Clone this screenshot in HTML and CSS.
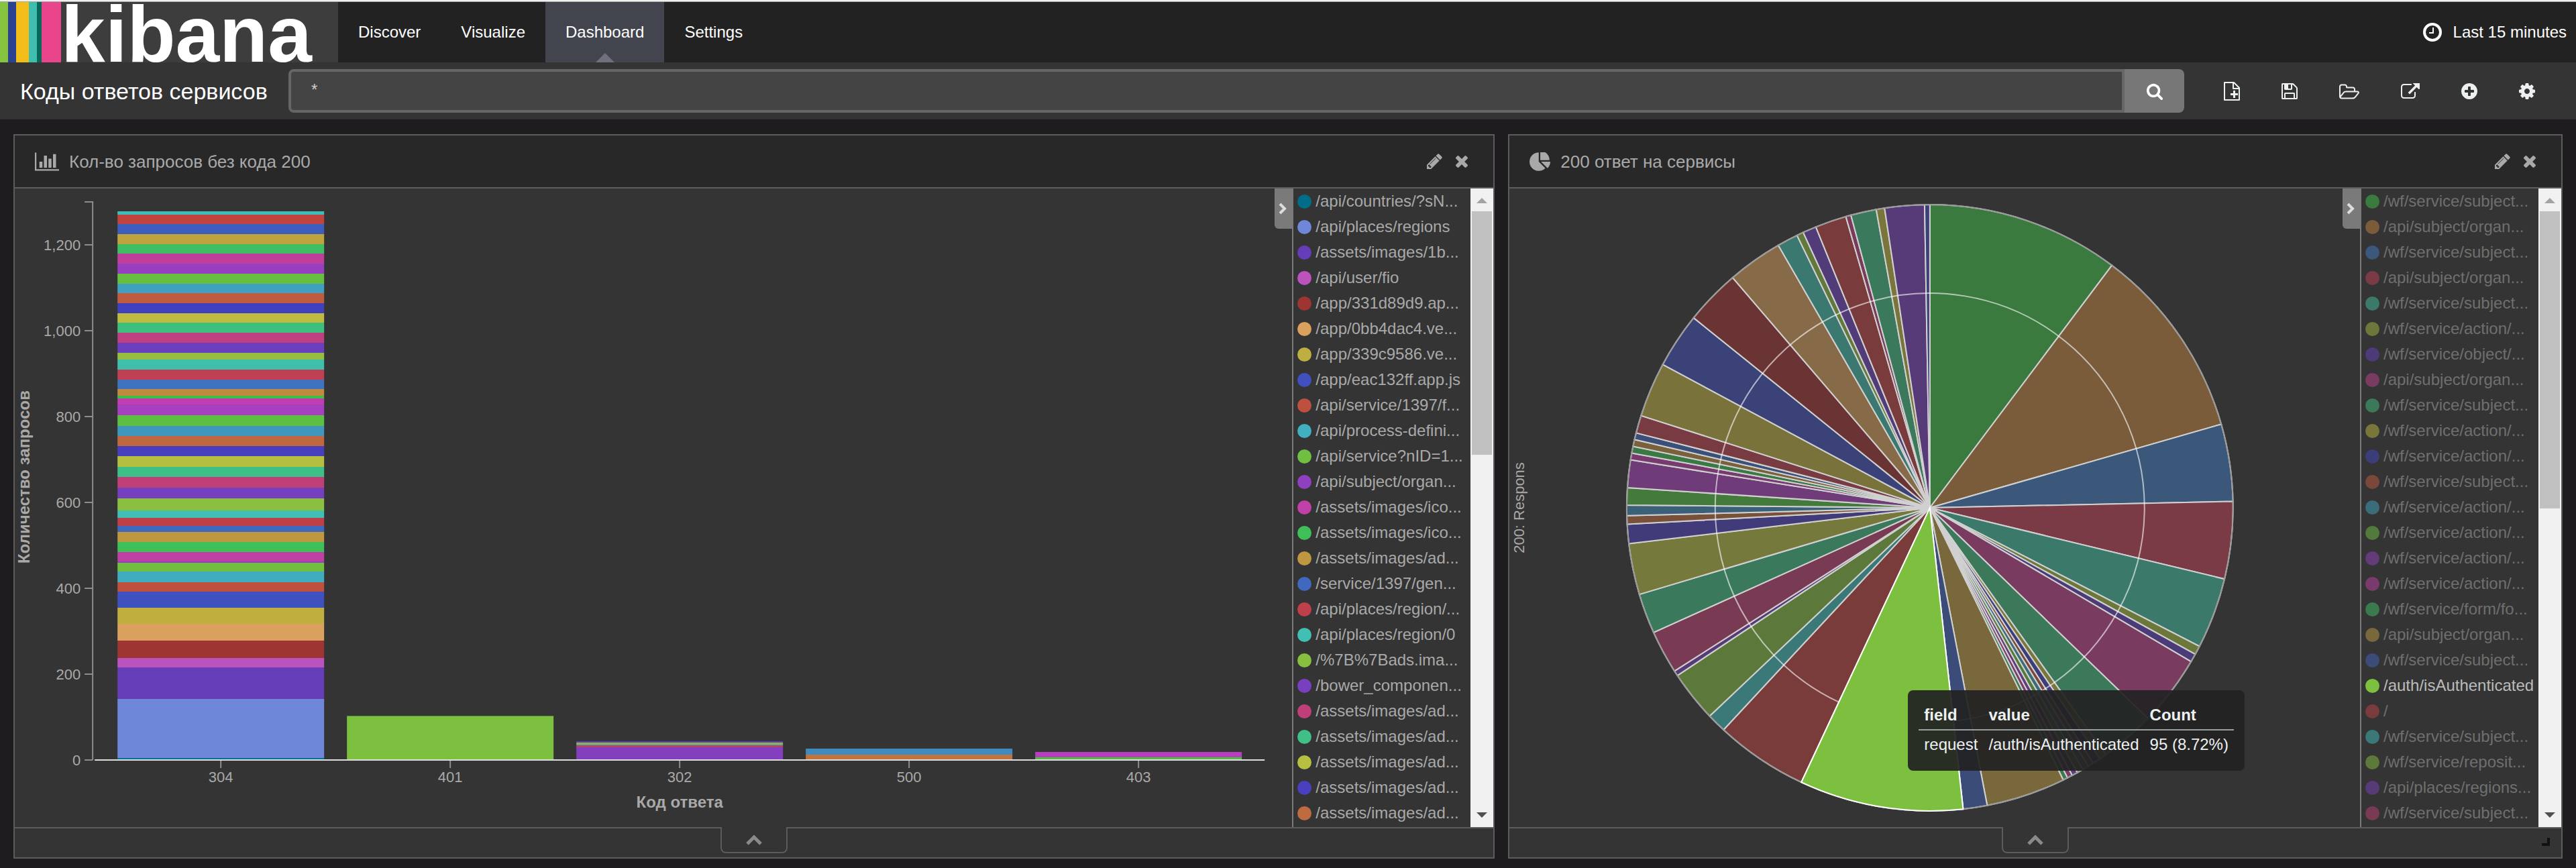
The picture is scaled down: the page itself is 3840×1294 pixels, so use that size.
FILE: index.html
```html
<!DOCTYPE html>
<html lang="ru">
<head>
<meta charset="utf-8">
<title>Коды ответов сервисов - Kibana</title>
<link rel="stylesheet" href="styles.css">
</head>
<body>
<svg class="sprite" aria-hidden="true">
  <symbol id="i-search" viewBox="0 0 1792 1792"><path d="M1216 832q0-185-131.500-316.500t-316.500-131.500-316.500 131.500-131.500 316.500 131.500 316.500 316.500 131.500 316.500-131.500 131.500-316.500zm512 832q0 52-38 90t-90 38q-54 0-90-38l-343-342q-179 124-399 124-143 0-273.500-55.500t-225-150-150-225-55.500-273.500 55.500-273.500 150-225 225-150 273.500-55.500 273.500 55.500 225 150 150 225 55.500 273.500q0 220-124 399l343 343q37 37 37 90z"/></symbol>
  <symbol id="i-pencil" viewBox="128 128 1536 1536"><path d="M491 1536l91-91-235-235-91 91v107h128v128h107zm523-928q0-22-22-22-10 0-17 7l-542 542q-7 7-7 17 0 22 22 22 10 0 17-7l542-542q7-7 7-17zm-54-192l416 416-832 832h-416v-416zm683 96q0 53-37 90l-166 166-416-416 166-165q36-38 90-38 53 0 91 38l235 234q37 39 37 91z"/></symbol>
  <symbol id="i-times" viewBox="302 302 1188 1188"><path d="M1490 1322q0 40-28 68l-136 136q-28 28-68 28t-68-28l-294-294-294 294q-28 28-68 28t-68-28l-136-136q-28-28-28-68t28-68l294-294-294-294q-28-28-28-68t28-68l136-136q28-28 68-28t68 28l294 294 294-294q28-28 68-28t68 28l136 136q28 28 28 68t-28 68l-294 294 294 294q28 28 28 68z" transform="translate(0 -64)"/></symbol>
  <symbol id="i-save" viewBox="128 128 1536 1536"><path d="M512 1536h768v-384h-768v384zm896 0h128v-896q0-14-10-38.500t-20-34.500l-281-281q-10-10-34-20t-39-10v416q0 40-28 68t-68 28h-576q-40 0-68-28t-28-68v-416h-128v1280h128v-416q0-40 28-68t68-28h832q40 0 68 28t28 68v416zm-384-928v-320q0-13-9.500-22.500t-22.500-9.500h-192q-13 0-22.500 9.500t-9.500 22.500v320q0 13 9.500 22.500t22.500 9.500h192q13 0 22.500-9.500t9.500-22.500zm640 32v928q0 40-28 68t-68 28h-1344q-40 0-68-28t-28-68v-1344q0-40 28-68t68-28h928q40 0 88 20t76 48l280 280q28 28 48 76t20 88z"/></symbol>
  <symbol id="i-folder" viewBox="0 128 1920 1536"><path d="M1781 1023q0-35-53-35h-1088q-40 0-85.500 21.500t-71.500 52.500l-294 363q-18 24-18 40 0 35 53 35h1088q40 0 86-22t71-53l294-363q18-22 18-39zm-1141-163h768v-160q0-40-28-68t-68-28h-576q-40 0-68-28t-28-68v-64q0-40-28-68t-68-28h-320q-40 0-68 28t-28 68v853l256-315q44-53 116-87.500t140-34.500zm1269 163q0 62-46 120l-295 363q-43 53-116 87.500t-140 34.500h-1088q-92 0-158-66t-66-158v-960q0-92 66-158t158-66h320q92 0 158 66t66 158v32h544q92 0 158 66t66 158v160h192q54 0 99 24.500t67 70.500q15 32 15 68z"/></symbol>
  <symbol id="i-share" viewBox="0 64 1792 1536"><path d="M1408 928v320q0 119-84.500 203.500t-203.500 84.500h-832q-119 0-203.500-84.500t-84.500-203.500v-832q0-119 84.500-203.500t203.500-84.500h704q14 0 23 9t9 23v64q0 14-9 23t-23 9h-704q-66 0-113 47t-47 113v832q0 66 47 113t113 47h832q66 0 113-47t47-113v-320q0-14 9-23t23-9h64q14 0 23 9t9 23zm384-864v512q0 26-19 45t-45 19-45-19l-176-176-652 652q-10 10-23 10t-23-10l-114-114q-10-10-10-23t10-23l652-652-176-176q-19-19-19-45t19-45 45-19h512q26 0 45 19t19 45z"/></symbol>
  <symbol id="i-plus" viewBox="128 128 1536 1536"><path d="M1344 960v-128q0-26-19-45t-45-19h-256v-256q0-26-19-45t-45-19h-128q-26 0-45 19t-19 45v256h-256q-26 0-45 19t-19 45v128q0 26 19 45t45 19h256v256q0 26 19 45t45 19h128q26 0 45-19t19-45v-256h256q26 0 45-19t19-45zm320-64q0 209-103 385.500t-279.500 279.500-385.500 103-385.500-103-279.500-279.500-103-385.500 103-385.500 279.500-279.500 385.500-103 385.500 103 279.500 279.500 103 385.500z"/></symbol>
  <symbol id="i-cog" viewBox="128 128 1536 1536"><path d="M1152 896q0-106-75-181t-181-75-181 75-75 181 75 181 181 75 181-75 75-181zm512-109v222q0 12-8 23t-20 13l-185 28q-19 54-39 91 35 50 107 138 10 12 10 25t-9 23q-27 37-99 108t-94 71q-12 0-26-9l-138-108q-44 23-91 38-16 136-29 186-7 28-36 28h-222q-14 0-24.500-8.500t-11.500-21.500l-28-184q-49-16-90-37l-141 107q-10 9-25 9-14 0-25-11-126-114-165-168-7-10-7-23 0-12 8-23 15-21 51-66.500t54-70.500q-27-50-41-99l-183-27q-13-2-21-12.500t-8-23.500v-222q0-12 8-23t19-13l186-28q14-46 39-92-40-57-107-138-10-12-10-24 0-10 9-23 26-36 98.500-107.500t94.500-71.500q13 0 26 10l138 107q44-23 91-38 16-136 29-186 7-28 36-28h222q14 0 24.500 8.500t11.500 21.500l28 184q49 16 90 37l142-107q9-9 24-9 13 0 25 10 129 119 165 170 7 8 7 22 0 12-8 23-15 21-51 66.500t-54 70.500q26 50 41 98l183 28q13 2 21 12.500t8 23.500z"/></symbol>
  <symbol id="i-new" viewBox="0 0 24 28"><path fill="none" stroke="currentColor" stroke-width="2" stroke-linejoin="round" d="M1 1h14l8 8v18H1zM14 1v9h9"/><path d="M14 13h3v4h4v3h-4v4h-3v-4h-4v-3h4z"/></symbol>
  <symbol id="i-clock" viewBox="0 0 28 28"><circle cx="14" cy="14" r="12" fill="none" stroke="currentColor" stroke-width="4"/><path fill="none" stroke="currentColor" stroke-width="2" d="M15 7v8H9"/></symbol>
  <symbol id="i-bars" viewBox="0 128 2048 1536"><path d="M640 896v512h-256v-512h256zm384-512v1024h-256v-1024h256zm1024 1152v128h-2048v-1536h128v1408h1920zm-640-896v768h-256v-768h256zm384-384v1152h-256v-1152h256z"/></symbol>
  <symbol id="i-pie" viewBox="0 128 1728 1536"><path d="M768 890l546 546q-106 108-247.500 168t-298.500 60q-209 0-385.500-103t-279.500-279.500-103-385.500 103-385.500 279.500-279.500 385.500-103v762zm187 6h773q0 157-60 298.500t-168 247.500zm709-128h-768v-768q209 0 385.500 103t279.500 279.500 103 385.500z"/></symbol>
  <symbol id="i-right" viewBox="0 0 12 18"><path fill="none" stroke="currentColor" stroke-width="4" d="M2 2l7 7-7 7"/></symbol>
  <symbol id="i-up" viewBox="0 0 24 16"><path fill="none" stroke="currentColor" stroke-width="5" d="M2 14l10-10 10 10"/></symbol>
</svg>

<header class="navbar">
  <a class="logo" href="#" aria-label="kibana"><span class="stripe s1"></span><span class="stripe s2"></span><span class="stripe s3"></span><span class="stripe s4"></span><span class="stripe s5"></span><span class="stripe s6"></span><span class="wordmark">kibana</span></a>
  <nav class="tabs">
    <a class="tab" href="#discover">Discover</a>
    <a class="tab" href="#visualize">Visualize</a>
    <a class="tab active" href="#dashboard">Dashboard</a>
    <a class="tab" href="#settings">Settings</a>
  </nav>
  <button class="timepicker" type="button"><svg class="ic28"><use href="#i-clock"/></svg>Last 15 minutes</button>
</header>

<div class="toolbar">
  <h1 class="dash-title">Коды ответов сервисов</h1>
  <form class="query">
    <input class="query-input" type="text" value="*" aria-label="Query">
    <button class="query-go" type="button" aria-label="Search"><svg class="ic26"><use href="#i-search"/></svg></button>
  </form>
  <div class="actions">
    <button type="button" aria-label="New dashboard"><svg class="ic-new"><use href="#i-new"/></svg></button>
    <button type="button" aria-label="Save dashboard"><svg class="ic24"><use href="#i-save"/></svg></button>
    <button type="button" aria-label="Load dashboard"><svg class="ic-wide"><use href="#i-folder"/></svg></button>
    <button type="button" aria-label="Share dashboard"><svg class="ic-share"><use href="#i-share"/></svg></button>
    <button type="button" aria-label="Add visualization"><svg class="ic24"><use href="#i-plus"/></svg></button>
    <button type="button" aria-label="Options"><svg class="ic24"><use href="#i-cog"/></svg></button>
  </div>
</div>

<main class="grid">
  <section class="panel span7">
    <header class="panel-head">
      <svg class="ic-type"><use href="#i-bars"/></svg>
      <h2 class="panel-title">Кол-во запросов без кода 200</h2>
      <button type="button" aria-label="Edit"><svg class="ic22"><use href="#i-pencil"/></svg></button>
      <button type="button" aria-label="Remove"><svg class="ic18"><use href="#i-times"/></svg></button>
    </header>
    <div class="vis">
      <div class="chart"><svg id="bar-chart" class="chart-svg" viewBox="0 0 1904 952" role="img" aria-label="Кол-во запросов без кода 200"></svg>
        <button class="toggle" type="button" aria-label="Toggle legend"><svg class="ic-right"><use href="#i-right"/></svg></button>
      </div>
      <ul class="legend" id="bar-legend"></ul>
      <div class="scroll" aria-hidden="true"><span class="arrow-up"></span><span class="thumb"></span><span class="arrow-down"></span></div>
    </div>
    <footer class="spy"><button class="spy-tab" type="button" aria-label="Show data"><svg class="ic-up"><use href="#i-up"/></svg></button></footer>
  </section>

  <section class="panel span5">
    <header class="panel-head">
      <svg class="ic-pie"><use href="#i-pie"/></svg>
      <h2 class="panel-title">200 ответ на сервисы</h2>
      <button type="button" aria-label="Edit"><svg class="ic22"><use href="#i-pencil"/></svg></button>
      <button type="button" aria-label="Remove"><svg class="ic18"><use href="#i-times"/></svg></button>
    </header>
    <div class="vis">
      <div class="chart"><svg id="pie-chart" class="chart-svg" viewBox="0 0 1268 952" role="img" aria-label="200 ответ на сервисы"></svg>
        <button class="toggle" type="button" aria-label="Toggle legend"><svg class="ic-right"><use href="#i-right"/></svg></button>
        <div class="tooltip">
          <table>
            <thead><tr><th>field</th><th>value</th><th>Count</th></tr></thead>
            <tbody><tr><td>request</td><td>/auth/isAuthenticated</td><td>95 (8.72%)</td></tr></tbody>
          </table>
        </div>
      </div>
      <ul class="legend dimmed" id="pie-legend"></ul>
      <div class="scroll" aria-hidden="true"><span class="arrow-up"></span><span class="thumb long"></span><span class="arrow-down"></span></div>
    </div>
    <footer class="spy"><button class="spy-tab" type="button" aria-label="Show data"><svg class="ic-up"><use href="#i-up"/></svg></button><span class="resizer"></span></footer>
  </section>
</main>
<script src="charts.js"></script>
</body>
</html>
```
FILE: styles.css
```css
* { box-sizing: border-box; }
body {
  margin: 0;
  background: #1e1c1f;
  border-top: 2px solid #f0f0f0;
  color: #fff;
  font: 24px/38px "Liberation Sans", Arial, sans-serif;
}
.sprite { position: absolute; width: 0; height: 0; }
svg { display: block; fill: currentColor; flex: none; }
button { margin: 0; padding: 0; border: 0; background: none; color: inherit; font: inherit; cursor: pointer; }
a { color: inherit; text-decoration: none; }
h1, h2, ul { margin: 0; padding: 0; font-weight: normal; }
.ic28 { width: 28px; height: 28px; }
.ic26 { width: 26px; height: 26px; }
.ic24 { width: 24px; height: 24px; }
.ic22 { width: 23px; height: 23px; }
.ic18 { width: 18px; height: 18px; }
.ic-new { width: 24px; height: 28px; }
.ic-wide { width: 30px; height: 24px; }
.ic-share { width: 28px; height: 24px; }
.ic-type { width: 36px; height: 28px; }
.ic-pie { width: 31px; height: 28px; }
.ic-right { width: 12px; height: 18px; }
.ic-up { width: 24px; height: 16px; }

/* Top bar */
.navbar { display: flex; height: 91px; border-top: 1px solid #a8a8a8; background: #222; overflow: hidden; }
.logo { display: flex; width: 504px; background: #3d3d3d; }
.stripe { width: 12px; flex: none; }
.s1 { background: #86c440; }
.s2 { background: #2d4191; }
.s3 { width: 19px; background: #f3bd19; }
.s4 { background: #3ebdb0; }
.s5 { width: 7px; background: #07685a; }
.s6 { width: 29px; background: #ea458b; }
.wordmark { font-size: 118px; font-weight: bold; line-height: 96px; }
.tabs { display: flex; flex: 1; }
.tab { position: relative; padding: 0 30px; line-height: 90px; }
.tab.active { background: #42454d; }
.tab.active::after {
  content: "";
  position: absolute;
  left: 50%;
  bottom: 0;
  margin-left: -14px;
  border: 14px solid transparent;
  border-top: 0;
  border-bottom-color: #6e717b;
}
.timepicker { display: flex; align-items: center; gap: 17px; padding: 0 14px 0 0; }

/* Query bar */
.toolbar { display: flex; align-items: center; height: 85px; padding: 0 61px 0 30px; background: #343434; }
.dash-title { width: 400px; font-size: 34px; white-space: nowrap; }
.query { display: flex; flex: 1; height: 65px; }
.query-input {
  flex: 1;
  min-width: 0;
  padding: 0 30px 4px;
  border: 4px solid #666;
  border-radius: 8px 0 0 8px;
  background: #444;
  color: #ccc;
  font: inherit;
  outline: 0;
}
.query-go { display: flex; align-items: center; justify-content: center; width: 89px; border-radius: 0 8px 8px 0; background: #777; }
.actions { display: flex; align-items: center; gap: 62px; padding-left: 59px; color: #ecf0f1; }

/* Dashboard grid */
.grid { display: grid; grid-template-columns: repeat(12, 1fr); gap: 20px; padding: 22px 20px 14px; }
.panel { display: flex; flex-direction: column; min-width: 0; border: 2px solid #5c5c5c; background: #343434; color: #a9a9a9; }
.span7 { grid-column: span 7; }
.span5 { grid-column: span 5; }
.panel-head { display: flex; align-items: center; gap: 20px; height: 79px; padding: 0 38px 0 30px; border-bottom: 2px solid #5c5c5c; background: #282828; }
.panel-title { flex: 1; margin-left: -5px; font-size: 26px; }
.vis { display: flex; border-bottom: 2px solid #5c5c5c; }
.chart { position: relative; flex: 1; min-width: 0; }
.chart-svg { width: 100%; height: 0; min-height: 100%; }
.toggle {
  position: absolute;
  top: 0;
  right: -2px;
  display: flex;
  align-items: center;
  justify-content: center;
  width: 28px;
  height: 60px;
  padding-right: 4px;
  border-radius: 0 0 0 6px;
  background: #7a7a7a;
  color: #ddd;
}
.legend { width: 266px; padding: 0 0 2px 6px; border-left: 2px solid #7a7a7a; list-style: none; white-space: nowrap; overflow: hidden; }
.legend li { display: flex; align-items: center; gap: 6px; height: 38px; }
.dot { width: 21px; height: 21px; flex: none; border-radius: 50%; }
.dimmed { color: #6f6f6f; }
.dimmed .lit { color: #bbb; }
.scroll { display: flex; flex-direction: column; align-items: center; width: 34px; background: #f1f1f1; }
.arrow-up { margin: 14px 0 12px; border: 8px solid transparent; border-top: 0; border-bottom-color: #a3a3a3; }
.thumb { width: 30px; height: 363px; background: #c1c1c1; }
.thumb.long { height: 443px; }
.arrow-down { margin: auto 0 14px; border: 8px solid transparent; border-bottom: 0; border-top-color: #505050; }
.spy { position: relative; display: flex; justify-content: center; height: 43px; }
.spy-tab {
  display: flex;
  align-items: center;
  justify-content: center;
  width: 100px;
  height: 39px;
  margin-top: -2px;
  border: 2px solid #5c5c5c;
  border-top: 0;
  border-radius: 0 0 8px 8px;
  background: #343434;
  color: #8a8a8a;
}
.resizer { position: absolute; right: 17px; bottom: 17px; width: 12px; height: 12px; border: solid #111; border-width: 0 4px 4px 0; }

/* Chart drawing */
.axis { fill: none; stroke: #8e8e8e; stroke-width: 2; }
.baseline { stroke: #ddd; stroke-width: 2; }
.tick-text { font-size: 22px; fill: #a9a9a9; }
.axis-title { font-size: 24px; font-weight: bold; fill: #a9a9a9; text-anchor: middle; }
.pie-title { font-size: 22px; fill: #a9a9a9; text-anchor: middle; }
.end { text-anchor: end; }
.middle { text-anchor: middle; }
.slice { stroke: #d0d0d0; stroke-width: 2; }
.rim { fill: none; stroke: #999; stroke-width: 2; }
.ring { fill: none; stroke: #fff; stroke-opacity: .6; stroke-width: 2; }
.slice.hover { stroke: #fff; }

.tooltip { position: absolute; left: 594px; top: 748px; padding: 16px 16px 20px; border-radius: 8px; background: rgba(34, 34, 34, .93); color: #ecf0f1; }
.tooltip table { border-collapse: collapse; }
.tooltip th, .tooltip td { padding: 2px 8px 0; text-align: left; white-space: nowrap; line-height: 38px; }
.tooltip th { padding: 0 8px; line-height: 42px; border-bottom: 2px solid #95a0a0; }
```
FILE: charts.js
```js
const NS = 'http://www.w3.org/2000/svg';

function draw(parent, tag, attrs, text) {
  const node = document.createElementNS(NS, tag);
  Object.entries(attrs).forEach(([k, v]) => node.setAttribute(k, v));
  if (text) node.textContent = text;
  parent.appendChild(node);
}

function legend(id, rows) {
  const list = document.getElementById(id);
  rows.forEach(([color, label, lit]) => {
    const li = document.createElement('li');
    const dot = document.createElement('span');
    dot.className = 'dot';
    dot.style.background = color;
    if (lit) li.className = 'lit';
    li.append(dot, label);
    list.appendChild(li);
  });
}

/* Stacked bars: each bar is its x, its top, and [colour, bottom edge] downwards */
const bar = document.getElementById('bar-chart');
const bars = [
  ['304', 153, 34, [['#3fbdbd', 39], ['#bf433f', 53], ['#3f5cbf', 68], ['#bfa33f', 83], ['#3fbf62', 97], ['#bf3f9b', 112], ['#983fbf', 127], ['#66bf3f', 142], ['#3fa1bf', 156], ['#bf5c3f', 171], ['#403fbf', 186], ['#bfbb3f', 200], ['#3fbf7e', 215], ['#bf3f80', 230], ['#6b3fbf', 245], ['#94bf3f', 255], ['#3fbfab', 270], ['#bf3f53', 285], ['#3f73bf', 299], ['#bf8b3f', 309], ['#3fbf48', 313], ['#bf3fb2', 322], ['#a73fbf', 338], ['#5cbf3f', 354], ['#3f97bf', 369], ['#bf673f', 384], ['#483fbf', 399], ['#b5bf3f', 415], ['#3fbf88', 430], ['#bf3f77', 446], ['#763fbf', 462], ['#8abf3f', 480], ['#3fbfb5', 491], ['#bf3f49', 503], ['#3f68bf', 512], ['#bf973f', 527], ['#3fbf58', 542], ['#bf3fa5', 556], ['#8f3fbf', 558], ['#70bf3f', 571], ['#3fadbf', 587], ['#bf4f3f', 601], ['#3f50bf', 625], ['#bfaf3f', 649], ['#daa05d', 674], ['#9e3533', 700], ['#bc52bc', 714], ['#663db8', 761], ['#6f87d8', 849], ['#00728f', 851]]],
  ['401', 495, 786, [['#5f9632', 787], ['#7dbf3f', 851]]],
  ['302', 837, 824, [['#533fbf', 826], ['#b5a53f', 828], ['#3fbf92', 830], ['#bf3f62', 833], ['#843fbf', 851]]],
  ['500', 1179, 835, [['#3f8bbf', 844], ['#bf733f', 851]]],
  ['403', 1521, 840, [['#b53fbf', 848], ['#4dbf3f', 851]]]
];
bars.forEach(([code, x, top, parts]) => {
  let y = top;
  parts.forEach(([color, bottom]) => {
    draw(bar, 'rect', { x, y, width: 308, height: bottom - y, fill: color });
    y = bottom;
  });
  draw(bar, 'path', { class: 'axis', d: `M${x + 154} 852v12` });
  draw(bar, 'text', { class: 'tick-text middle', x: x + 154, y: 885 }, code);
});
draw(bar, 'path', { class: 'axis', d: 'M104 20h12V852' });
['1,200', '1,000', '800', '600', '400', '200', '0'].forEach((label, i) => {
  const y = 84 + 128 * i;
  draw(bar, 'path', { class: 'axis', d: `M104 ${y}h12` });
  draw(bar, 'text', { class: 'tick-text end', x: 98, y: y + 8 }, label);
});
draw(bar, 'path', { class: 'baseline', d: 'M119 852H1863' });
draw(bar, 'text', { class: 'axis-title', x: 991, y: 923 }, 'Код ответа');
draw(bar, 'text', { class: 'axis-title', transform: 'translate(22 430) rotate(-90)' }, 'Количество запросов');

legend('bar-legend', [
  ['#006e8a', '/api/countries/?sN...'], ['#6f87d8', '/api/places/regions'], ['#663db8', '/assets/images/1b...'],
  ['#bc52bc', '/api/user/fio'], ['#9e3533', '/app/331d89d9.ap...'], ['#daa05d', '/app/0bb4dac4.ve...'],
  ['#bfaf40', '/app/339c9586.ve...'], ['#4050bf', '/app/eac132ff.app.js'], ['#bf5040', '/api/service/1397/f...'],
  ['#40afbf', '/api/process-defini...'], ['#70bf40', '/api/service?nID=1...'], ['#8f40bf', '/api/subject/organ...'],
  ['#bf40a7', '/assets/images/ico...'], ['#40bf58', '/assets/images/ico...'], ['#bf9740', '/assets/images/ad...'],
  ['#4068bf', '/service/1397/gen...'], ['#bf404a', '/api/places/region/...'], ['#40bfb5', '/api/places/region/0'],
  ['#87bf40', '/%7B%7Bads.ima...'], ['#7840bf', '/bower_componen...'], ['#bf4078', '/assets/images/ad...'],
  ['#40bf87', '/assets/images/ad...'], ['#b7bf40', '/assets/images/ad...'], ['#4a40bf', '/assets/images/ad...'],
  ['#bf6b40', '/assets/images/ad...']
]);

/* Pie: [colour, end angle in degrees clockwise from the top] */
const pie = document.getElementById('pie-chart');
const slices = [
  ['#3b7a3e', 36.9], ['#7a5c3b', 74], ['#3b5779', 88.8], ['#7a3b47', 103.6], ['#3b796b', 117.2], ['#6c783b', 118.9],
  ['#4c3b79', 120.5], ['#7a3b60', 134], ['#3b795a', 144.5], ['#79763b', 145.9], ['#3b3e79', 147.4], ['#7a483b', 148.5],
  ['#3b6c79', 149.7], ['#517a3b', 150.9], ['#633b79', 152], ['#793b6b', 153], ['#3b794e', 153.9], ['#79683b', 169.1],
  ['#3b4c79', 173.7], ['#7dbf3f', 205.1], ['#7a3b3b', 222.9], ['#3b7979', 226.6], ['#5c793b', 236.4], ['#573b79', 237.4],
  ['#793b54', 245.7], ['#3b795c', 253.4], ['#75793b', 263.2], ['#423b79', 266.9], ['#795039', 268.5], ['#3b6179', 270.5],
  ['#447a3b', 273.8], ['#6f3b79', 279.1], ['#793b6f', 280.4], ['#3b7944', 281.7], ['#79613b', 283], ['#3b5079', 284.3],
  ['#793b42', 287.7], ['#79723b', 298.2], ['#3b4278', 308.8], ['#6a3434', 319.4], ['#876b48', 330], ['#3b7870', 334],
  ['#61793b', 335.3], ['#523b79', 337.9], ['#793b3b', 343.9], ['#793b59', 344.9], ['#3b795c', 349.8], ['#79753b', 351.4],
  ['#573b79', 359], ['#3b4078', 360]
];
const CX = 627, CY = 476, R = 452;
const point = (deg, r) => {
  const a = deg * Math.PI / 180;
  return `${(CX + r * Math.sin(a)).toFixed(2)} ${(CY - r * Math.cos(a)).toFixed(2)}`;
};
const arc = (from, to, r) => `M${point(from, r)}A${r} ${r} 0 ${to - from > 180 ? 1 : 0} 1 ${point(to, r)}`;
const HOVER = 19;
let from = 0;
slices.forEach(([fill, to]) => {
  draw(pie, 'path', { class: 'slice', fill, d: `${arc(from, to, R)}L${CX} ${CY}z` });
  from = to;
});
draw(pie, 'circle', { class: 'rim', cx: CX, cy: CY, r: R });
draw(pie, 'path', { class: 'ring', d: arc(slices[HOVER][1], slices[HOVER - 1][1] + 360, 320) });
draw(pie, 'path', { class: 'slice hover', fill: slices[HOVER][0], d: `${arc(slices[HOVER - 1][1], slices[HOVER][1], R)}L${CX} ${CY}z` });
draw(pie, 'text', { class: 'pie-title', transform: 'translate(22 476) rotate(-90)' }, '200: Respons');

const subject = '/wf/service/subject...', action = '/wf/service/action/...', organ = '/api/subject/organ...';
legend('pie-legend', [
  ['#3b7a3e', subject], ['#7a5c3b', organ], ['#3b5779', subject], ['#7a3b47', organ], ['#3b796b', subject],
  ['#6c783b', action], ['#4c3b79', '/wf/service/object/...'], ['#7a3b60', organ], ['#3b795a', subject],
  ['#79763b', action], ['#3b3e79', action], ['#7a483b', subject], ['#3b6c79', action], ['#517a3b', action],
  ['#633b79', action], ['#793b6b', action], ['#3b794e', '/wf/service/form/fo...'], ['#79683b', organ],
  ['#3b4c79', subject], ['#7dbf3f', '/auth/isAuthenticated', true], ['#793b3b', '/'], ['#3b7979', subject],
  ['#5c793b', '/wf/service/reposit...'], ['#573b79', '/api/places/regions...'], ['#793b54', subject]
]);
```
